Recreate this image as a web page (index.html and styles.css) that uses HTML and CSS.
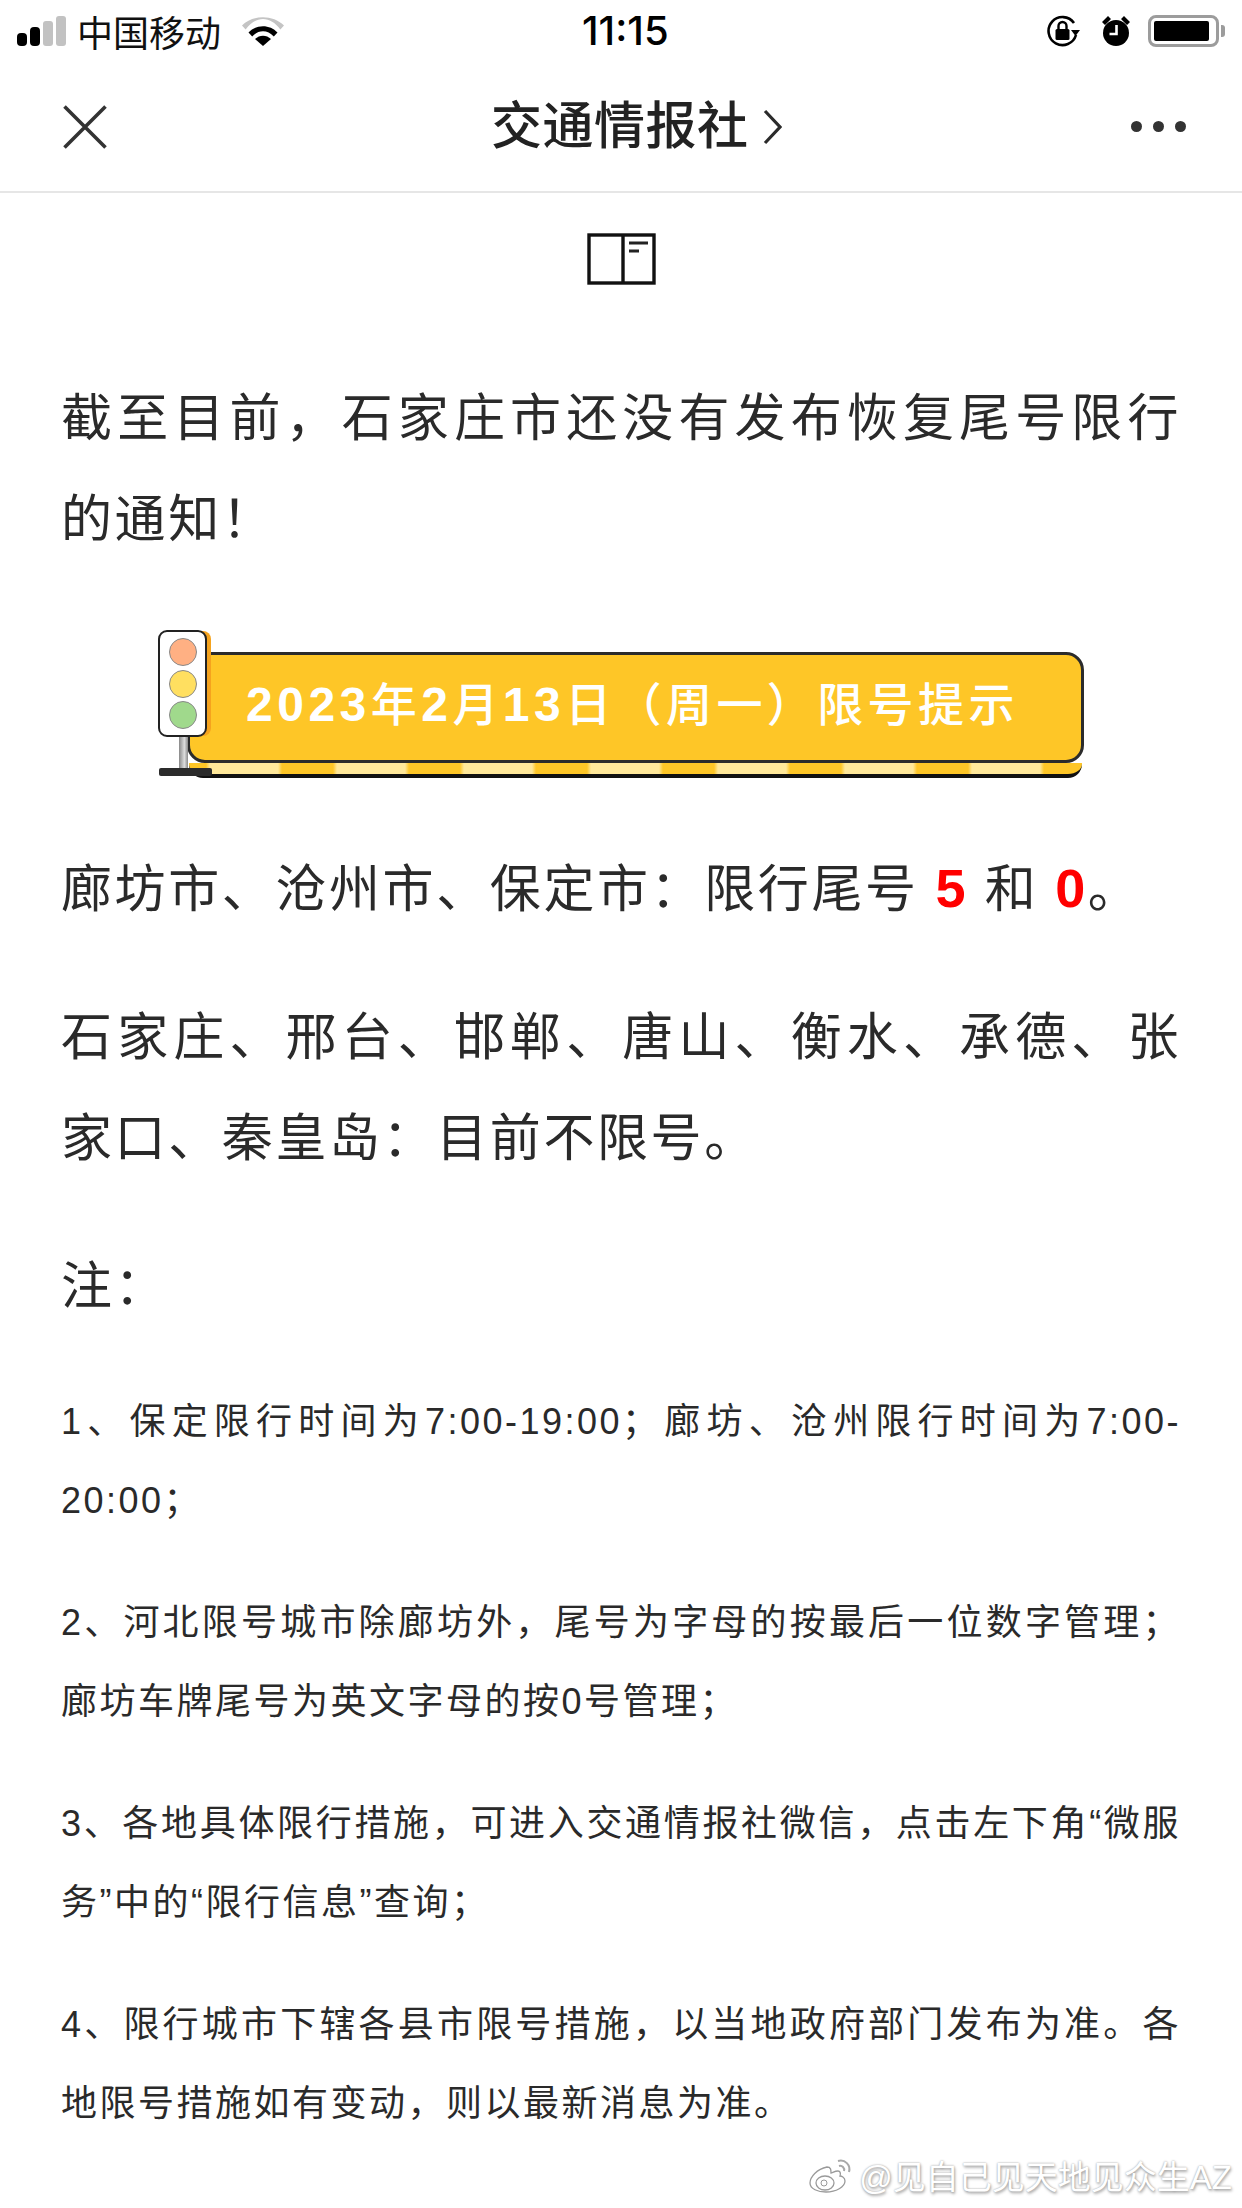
FILE: index.html
```html
<!DOCTYPE html>
<html lang="zh-CN">
<head>
<meta charset="utf-8">
<title>交通情报社</title>
<link rel="stylesheet" href="styles.css">
</head>
<body>
<div class="screen">
  <header class="status">
    <div class="status-left">
      <svg class="signal" width="49" height="30" viewBox="0 0 49 30"><rect x="0" y="17" width="10" height="13" rx="4" fill="#000"/><rect x="13" y="11" width="10" height="19" rx="4" fill="#000"/><rect x="26" y="5" width="10" height="25" rx="3" fill="#c2c2c2"/><rect x="39" y="0" width="10" height="30" rx="3" fill="#c2c2c2"/></svg>
      <span class="carrier">中国移动</span>
      <svg class="wifi" width="42" height="30" viewBox="0 0 42 30"><path d="M0 9.5C11-1.5 31-1.5 42 9.5l-3.6 4C28-.5 14-.5 3.600 13.500z" fill="#c4c4c4"/><path d="M6.500 16.500C14 8 28 8 35.500 16.500l-3.700 4C25.500 13.500 16.500 13.500 10.200 20.500z" fill="#000"/><path d="M13 23c4.500-4.500 11.500-4.500 16 0l-8 7z" fill="#000"/></svg>
    </div>
    <div class="time">11:15</div>
    <div class="status-right">
      <svg width="33" height="32" viewBox="0 0 33 32"><path d="M27 8A14 14 0 1 0 29 20" fill="none" stroke="#000" stroke-width="2.600"/><path d="M24 15h9l-4.500 6z" fill="#000"/><rect x="8.500" y="14" width="14" height="11" rx="1.500" fill="#000"/><path d="M11.500 14v-3a4 4 0 0 1 8 0v3" fill="none" stroke="#000" stroke-width="2.400"/></svg>
      <svg width="30" height="32" viewBox="0 0 30 32"><circle cx="15" cy="18" r="13" fill="#000"/><path d="M1 7l6-6 3 3-6 6zM29 7l-6-6-3 3 6 6z" fill="#000"/><path d="M15.500 10v9h-7" fill="none" stroke="#fff" stroke-width="2.600"/></svg>
      <div class="battery"><div class="battery-body"><div class="battery-fill"></div></div><div class="battery-nub"></div></div>
    </div>
  </header>

  <nav class="nav">
    <svg class="close" width="44" height="44" viewBox="0 0 44 44"><path d="M1.500 1.500l41 41M42.500 1.500l-41 41" stroke="#333" stroke-width="3.600" fill="none"/></svg>
    <div class="nav-title">
      <span>交通情报社</span>
      <svg width="19" height="36" viewBox="0 0 19 36"><path d="M2 2l15 16L2 34" fill="none" stroke="#2b2b2b" stroke-width="3.200"/></svg>
    </div>
    <div class="dots"><i></i><i></i><i></i></div>
  </nav>

  <div class="book-row">
    <svg width="69" height="52" viewBox="0 0 69 52"><rect x="2" y="2" width="65" height="48" fill="none" stroke="#111" stroke-width="3.400"/><path d="M36 2v48" stroke="#111" stroke-width="3.400"/><path d="M42 10h19M42 18h10" stroke="#222" stroke-width="3"/></svg>
  </div>

  <main class="article">
    <p class="big">截至目前&#xFF0C;石家庄市还没有发布恢复尾号限行的通知&#xFF01;</p>

    <div class="banner-wrap">
      <div class="banner">
        <div class="banner-face"><span class="banner-text"><b>2023</b>年<b>2</b>月<b>13</b>日&#xFF08;周一&#xFF09;限号提示</span></div>
        <div class="banner-stripe"></div>
      </div>
      <div class="light">
        <div class="light-box"><i class="lamp red"></i><i class="lamp yellow"></i><i class="lamp green"></i></div>
        <div class="light-pole"></div>
        <div class="light-base"></div>
      </div>
    </div>

    <p class="big">廊坊市、沧州市、保定市&#xFF1A;限行尾号 <b class="hot">5</b> 和 <b class="hot">0</b>。</p>
    <p class="big">石家庄、邢台、邯郸、唐山、衡水、承德、张家口、秦皇岛&#xFF1A;目前不限号。</p>
    <p class="big note">注&#xFF1A;</p>

    <p class="small">1、保定限行时间为7:00-19:00&#xFF1B;廊坊、沧州限行时间为7:00-20:00&#xFF1B;</p>
    <p class="small">2、河北限号城市除廊坊外&#xFF0C;尾号为字母的按最后一位数字管理&#xFF1B;廊坊车牌尾号为英文字母的按0号管理&#xFF1B;</p>
    <p class="small">3、各地具体限行措施&#xFF0C;可进入交通情报社微信&#xFF0C;点击左下角“微服务”中的“限行信息”查询&#xFF1B;</p>
    <p class="small">4、限行城市下辖各县市限号措施&#xFF0C;以当地政府部门发布为准。各地限号措施如有变动&#xFF0C;则以最新消息为准。</p>
  </main>

  <div class="watermark">
    <svg width="46" height="36" viewBox="0 0 46 36"><path d="M18 10C8 12 1 20 1 26c0 6 8 9 16 9 10 0 19-5 19-11 0-4-4-5-5-5 1-3 0-5-2-5-3 0-6 2-7 2 0-3 0-6-4-6z" fill="#fff" stroke="#9a9a9a" stroke-width="1.300"/><ellipse cx="16" cy="26" rx="9" ry="7" fill="none" stroke="#9a9a9a" stroke-width="1.300"/><circle cx="15" cy="26" r="3" fill="none" stroke="#9a9a9a"/><path d="M29 4c7-2 13 4 11 11M30 9c3-1 6 2 5 5" fill="none" stroke="#a8a8a8" stroke-width="2"/></svg>
    <span>@见自己见天地见众生AZ</span>
  </div>
</div>
</body>
</html>
```
FILE: styles.css
```css
* { box-sizing: border-box; }
html, body { margin: 0; padding: 0; background: #fff; }
.screen {
  position: relative;
  width: 1242px;
  height: 2208px;
  overflow: hidden;
  background: #fff;
  color: #222;
  font-family: "Liberation Sans", "Noto Sans CJK SC", sans-serif;
}
.status {
  height: 62px;
  display: flex;
  align-items: center;
  justify-content: space-between;
  position: relative;
  padding: 0 17px 0 17px;
  color: #000;
}
.status-left { display: flex; align-items: center; }
.carrier { font-size: 36px; margin-left: 11px; color: #111; }
.wifi { margin-left: 21px; }
.time {
  font-size: 40px;
  font-weight: 500;
  position: absolute;
  left: 582px;
  top: 8px;
  line-height: 46px;
  font-family: "Inter", "Liberation Sans", sans-serif;
}
.status-right { display: flex; align-items: center; gap: 21px; }
.battery { display: flex; align-items: center; margin-left: -4px; }
.battery-body {
  width: 71px;
  height: 32px;
  border: 3px solid #9c9c9c;
  border-radius: 8px;
  padding: 3px;
  display: flex;
}
.battery-fill { width: 55px; background: #000; border-radius: 2px; }
.battery-nub { width: 4px; height: 12px; background: #9c9c9c; border-radius: 0 3px 3px 0; margin-left: 2px; }

.nav {
  height: 131px;
  border-bottom: 2px solid #e6e6e6;
  display: flex;
  align-items: center;
  justify-content: space-between;
  position: relative;
  padding: 0 56px 0 63px;
}
.nav-title {
  position: absolute;
  left: 491px;
  top: 32px;
  display: flex;
  align-items: center;
  gap: 14px;
  font-size: 51px;
  font-weight: 500;
  line-height: 66px;
  letter-spacing: 0.500px;
  color: #222;
}
.dots { display: flex; gap: 11px; }
.dots i { width: 11px; height: 11px; border-radius: 50%; background: #333; display: block; }

.book-row { display: flex; justify-content: center; padding-top: 40px; }
.book-row svg { display: block; }

.article { padding: 83px 61px 0; }
.article p { margin: 0; text-align: justify; }
.big {
  font-size: 51px;
  line-height: 101px;
  letter-spacing: 2.600px;
  color: #2a2a2a;
  margin-bottom: 47px !important;
}
.big.note { margin-bottom: 45px !important; }
.small {
  font-size: 36px;
  line-height: 79px;
  letter-spacing: 2.500px;
  color: #2a2a2a;
  margin-bottom: 43px !important;
}
.hot { color: #f00; font-weight: 700; font-size: 54px; line-height: 1; }

.banner-wrap {
  position: relative;
  height: 150px;
  margin-top: 60px;
  margin-bottom: 59px;
}
.banner {
  position: absolute;
  left: 126px;
  top: 22px;
  width: 897px;
}
.banner-face {
  height: 111px;
  background: #fec627;
  border: 3px solid #2b2b2b;
  border-radius: 0 18px 18px 18px;
  display: flex;
  align-items: center;
  padding: 0 0 14px 56px;
}
.banner-text {
  font-size: 46px;
  letter-spacing: 4.400px;
  font-weight: 500;
  color: #fff;
  white-space: nowrap;
}
.banner-text b { font-size: 48px; letter-spacing: 4.500px; font-weight: 700; }
.banner-stripe {
  height: 15px;
  margin: 0 2px;
  border-bottom: 4px solid #111;
  border-radius: 0 0 14px 14px;
  background: repeating-linear-gradient(90deg, #fec627 0 17px, #ffe89a 21px 89px, #fec627 93px 127px);
}
.light {
  position: absolute;
  left: 97px;
  top: 0;
  width: 54px;
  display: flex;
  flex-direction: column;
  align-items: flex-start;
}
.light-box {
  width: 49px;
  height: 107px;
  background: #fff;
  border: 2px solid #222;
  border-radius: 9px;
  box-shadow: 5px 0 0 -1px #f5a31e;
  display: flex;
  flex-direction: column;
  align-items: center;
  justify-content: space-between;
  padding: 6px 0;
}
.lamp { width: 28px; height: 28px; border-radius: 50%; border: 1.500px solid #888; display: block; }
.red { background: #ffb083; }
.yellow { background: #ffdf60; }
.green { background: #a0d98c; }
.light-pole { width: 9px; height: 31px; margin-left: 21px; background: linear-gradient(90deg, #888, #ddd 60%, #888); }
.light-base { width: 53px; height: 8px; background: #2b2b2b; border-radius: 2px; margin-left: 1px; }

.watermark {
  position: absolute;
  right: 10px;
  bottom: 9px;
  display: flex;
  align-items: center;
  gap: 4px;
  font-size: 33px;
  color: #fff;
  text-shadow: 0 0 2px #999, 1px 2px 3px #aaa;
}
```
